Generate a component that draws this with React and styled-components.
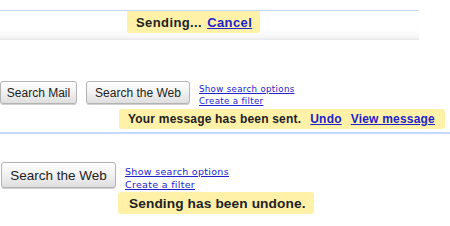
import styled, { createGlobalStyle } from "styled-components";

const GlobalStyle = createGlobalStyle`
  html, body {
    margin: 0;
    padding: 0;
    background: #fff;
  }
  body {
    width: 450px;
    height: 226px;
    overflow: hidden;
    font-family: "Liberation Sans", Arial, sans-serif;
  }
`;

const COLORS = {
  YELLOW: "#fff1a8",
  LINK: "#2222cc",
  TEXT: "#222",
  RULE: "#c3d9ff",
};

const Page = styled.div`
  display: flex;
  flex-direction: column;
  width: 450px;
`;

// first panel: top bar with the "Sending..." badge hanging from it
const TopBar = styled.div`
  margin-top: 10px;
  width: 419px;
  height: 30px;
  border-top: solid 1px ${COLORS.RULE};
  background: linear-gradient(#fff 0px, #fff 18px, #f6f6f6 27px, #e8e8e8 28px, #f3f3f3 30px);
  display: flex;
  padding-left: 127px;
  box-sizing: border-box;
`;

const Badge = styled.div`
  display: flex;
  align-items: center;
  gap: ${(p) => p.gap || 4}px;
  height: ${(p) => p.h}px;
  padding: 0 ${(p) => p.pr || 8}px 0 ${(p) => p.pl || 9}px;
  background: ${COLORS.YELLOW};
  border-radius: ${(p) => (p.hanging ? "0 0 3px 3px" : "3px")};
  font-weight: bold;
  font-size: ${(p) => p.size}px;
  letter-spacing: ${(p) => p.ls ?? 0.4}px;
  color: ${COLORS.TEXT};
  white-space: nowrap;
  box-sizing: border-box;
`;

const Strong = styled.span``;

const BadgeLink = styled.a`
  color: ${COLORS.LINK};
  text-decoration: underline;
  cursor: pointer;
`;

// search panels
const SearchPanel = styled.div`
  display: flex;
  flex-direction: column;
  margin-top: ${(p) => p.mt}px;
  padding-left: ${(p) => p.pl || 0}px;
`;

const SearchRow = styled.div`
  display: flex;
  align-items: flex-start;
  gap: ${(p) => p.gap}px;
`;

const Button = styled.button`
  height: ${(p) => p.h}px;
  width: ${(p) => p.w}px;
  padding: 0;
  font-family: "Liberation Sans", Arial, sans-serif;
  font-size: ${(p) => p.size}px;
  color: ${COLORS.TEXT};
  background: linear-gradient(#ffffff, #f1f1f1 50%, #dedede);
  border: solid 1px #b3b3b3;
  border-radius: 3px;
  box-shadow: 0 1px 0 #d0d0d0;
  white-space: nowrap;
`;

const Links = styled.div`
  display: flex;
  flex-direction: column;
  margin-left: ${(p) => p.ml}px;
  margin-top: ${(p) => p.mt}px;
  font-family: "DejaVu Sans", Verdana, sans-serif;
  font-size: ${(p) => p.size}px;
  line-height: ${(p) => p.lh}px;
  letter-spacing: 0.3px;

  a {
    color: ${COLORS.LINK};
    text-decoration: underline;
  }
`;

const NoticeRow = styled.div`
  display: flex;
  padding-left: ${(p) => p.pl}px;
  margin-top: ${(p) => p.mt}px;
`;

const Rule = styled.div`
  height: 2px;
  margin-top: 3px;
  background: ${COLORS.RULE};
`;

const App = () => {
  return (
    <>
      <GlobalStyle />
      <Page>
        <TopBar>
          <Badge hanging h={22} size={13} pl={9} pr={8} gap={5} ls={0.4}>
            <Strong>Sending...</Strong>
            <BadgeLink>Cancel</BadgeLink>
          </Badge>
        </TopBar>

        <SearchPanel mt={41}>
          <SearchRow gap={9}>
            <Button h={23} w={77} size={12}>Search Mail</Button>
            <Button h={23} w={104} size={12}>Search the Web</Button>
            <Links ml={0} mt={2} size={8.7} lh={12}>
              <a>Show search options</a>
              <a>Create a filter</a>
            </Links>
          </SearchRow>
          <NoticeRow pl={119} mt={2}>
            <Badge h={20} size={12} pl={9} pr={10} gap={9} ls={0.2}>
              <Strong>Your message has been sent.</Strong>
              <BadgeLink>Undo</BadgeLink>
              <BadgeLink>View message</BadgeLink>
            </Badge>
          </NoticeRow>
          <Rule />
        </SearchPanel>

        <SearchPanel mt={28} pl={1}>
          <SearchRow gap={9}>
            <Button h={26} w={115} size={13.5}>Search the Web</Button>
            <Links ml={0} mt={3} size={9.5} lh={13}>
              <a>Show search options</a>
              <a>Create a filter</a>
            </Links>
          </SearchRow>
          <NoticeRow pl={117} mt={1}>
            <Badge h={22} size={13.7} pl={11} pr={8} ls={0.1}>
              <Strong>Sending has been undone.</Strong>
            </Badge>
          </NoticeRow>
        </SearchPanel>
      </Page>
    </>
  );
};

export default App;
